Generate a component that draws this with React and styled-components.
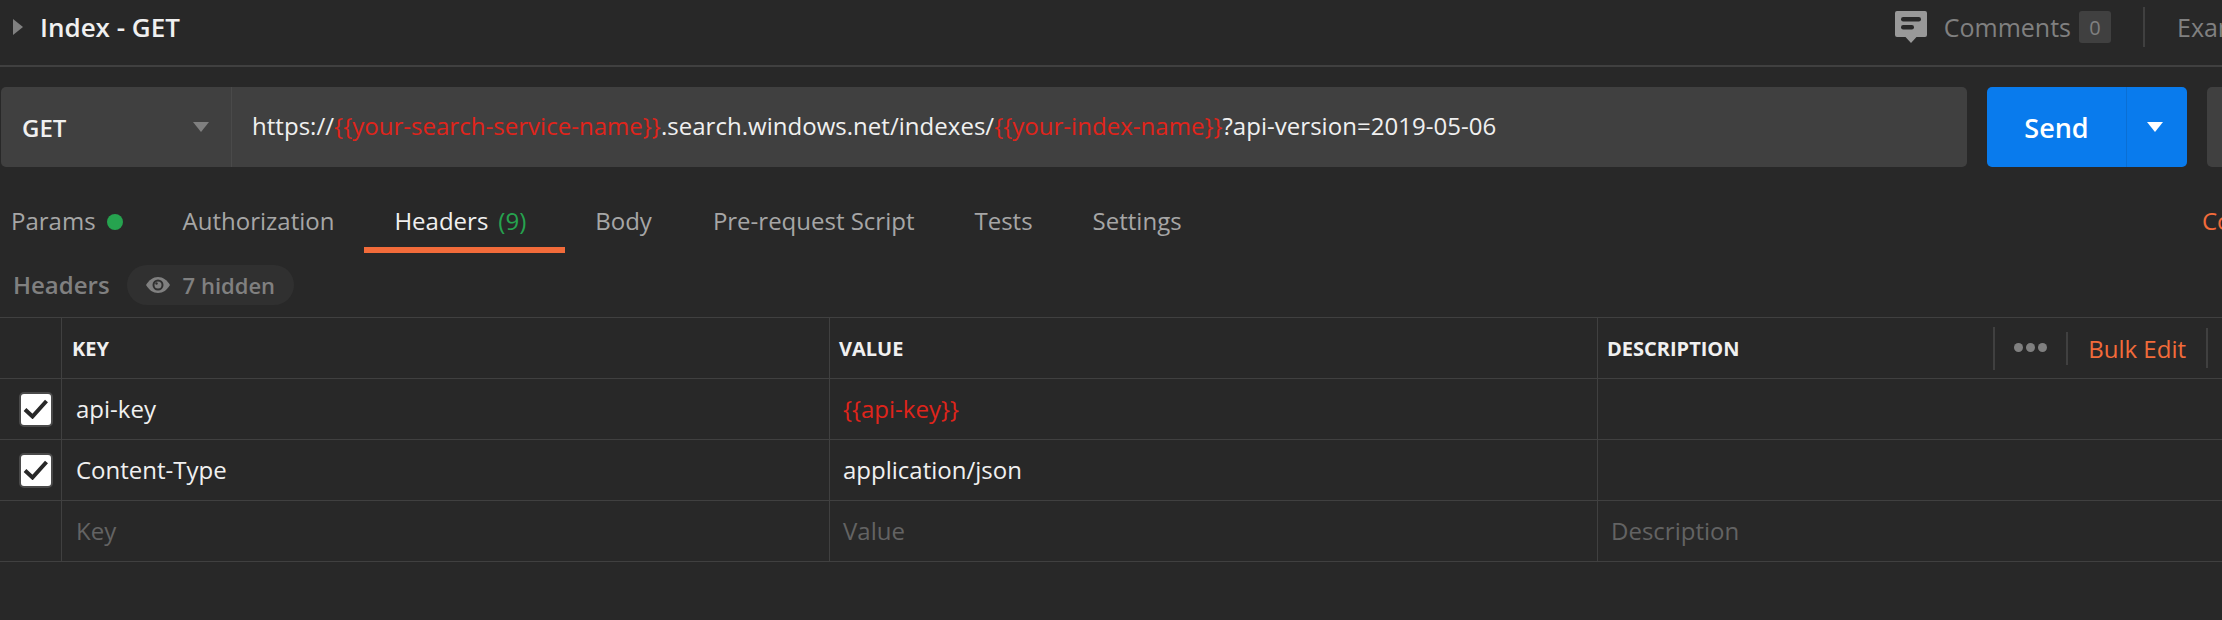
import React from 'react';
import styled, {createGlobalStyle} from 'styled-components';

const GlobalStyle = createGlobalStyle`
html, body {
  margin: 0;
  padding: 0;
  background: #282828;
}
`;

const Page = styled.div`
width: 2222px;
height: 620px;
overflow: hidden;
background: #282828;
color: #f0f0f0;
font-family: "Open Sans", "Noto Sans", sans-serif;
font-size: 24px;
white-space: nowrap;
`;

const TopBar = styled.header`
height: 65px;
border-bottom: 2px solid #404040;
display: flex;
align-items: center;
padding-left: 13px;
`;

const TitleWrap = styled.div`
display: flex;
align-items: center;
padding-bottom: 12px;
`;

const Title = styled.h1`
margin: 0 0 0 17px;
font-size: 26px;
font-weight: 600;
color: #f0f0f0;
`;

const TopRight = styled.div`
margin-left: auto;
display: flex;
align-items: center;
height: 65px;
padding-bottom: 11px;
box-sizing: border-box;
`;

const CommentsLabel = styled.span`
margin-left: 17px;
color: #808080;
font-size: 25px;
`;

const Badge = styled.span`
margin-left: 8px;
width: 32px;
height: 32px;
border-radius: 3px;
background: #404040;
color: #808080;
font-size: 20px;
display: flex;
align-items: center;
justify-content: center;
`;

const VDivider = styled.span`
width: 2px;
height: ${p => p.$h}px;
margin-left: ${p => p.$ml}px;
background: #404040;
flex-shrink: 0;
`;

const ClippedText = styled.span`
display: block;
width: ${p => p.$w}px;
overflow: hidden;
color: ${p => p.$color};
`;

const ExamplesWrap = styled.div`
margin-left: 32px;
font-size: 25px;
`;

const UrlRow = styled.div`
display: flex;
height: 80px;
margin-top: 20px;
padding-left: 1px;
`;

const UrlBox = styled.div`
width: 1966px;
flex-shrink: 0;
display: flex;
background: #404040;
border-radius: 5px;
`;

const Method = styled.div`
width: 231px;
box-sizing: border-box;
border-right: 1px solid #4a4a4a;
padding: 0 22px 0 21px;
display: flex;
align-items: center;
justify-content: space-between;
font-size: 24px;
font-weight: 600;
`;

const Url = styled.div`
padding-left: 20px;
line-height: 78px;
font-size: 24px;
letter-spacing: 0.03px;
color: #f0f0f0;
`;

const Variable = styled.span`
color: #e0241b;
`;

const SendButton = styled.div`
margin-left: 20px;
width: 200px;
flex-shrink: 0;
display: flex;
background: #097bed;
border-radius: 5px;
color: #fff;
`;

const SendLabel = styled.div`
width: 139px;
border-right: 1px solid #0a6fd4;
display: flex;
align-items: center;
justify-content: center;
font-size: 27px;
font-weight: 600;
`;

const SendCaret = styled.div`
flex: 1;
display: flex;
align-items: center;
justify-content: center;
padding: 0 4px 1px 0;
`;

const SaveStub = styled.div`
margin-left: 20px;
width: 15px;
flex-shrink: 0;
background: #404040;
border-radius: 5px 0 0 5px;
`;

const TabRow = styled.nav`
display: flex;
height: 86px;
box-sizing: border-box;
padding-top: 32px;
`;

const Tab = styled.div`
height: 54px;
box-sizing: border-box;
padding: 6px ${p => p.$pr}px 0 ${p => p.$pl}px;
font-size: 24px;
line-height: 32px;
color: ${p => (p.$active ? '#f0f0f0' : '#a6a6a6')};
border-bottom: 6px solid ${p => (p.$active ? '#f26b3a' : 'transparent')};
display: flex;
align-items: flex-start;
`;

const Dot = styled.span`
width: 16px;
height: 16px;
margin: 9px 0 0 11px;
border-radius: 50%;
background: #26a34f;
`;

const Count = styled.span`
margin-left: 10px;
color: #26a34f;
`;

const CookiesWrap = styled.div`
margin-left: auto;
padding-top: 6px;
line-height: 32px;
`;

const SubHeader = styled.div`
height: 64px;
box-sizing: border-box;
padding: 12px 0 0 13px;
display: flex;
align-items: flex-start;
`;

const SubTitle = styled.span`
font-size: 24px;
font-weight: 600;
line-height: 40px;
color: #808080;
`;

const HiddenPill = styled.div`
margin-left: 17px;
width: 167px;
height: 40px;
box-sizing: border-box;
padding-left: 19px;
border-radius: 20px;
background: #303030;
color: #808080;
font-size: 22px;
font-weight: 600;
display: flex;
align-items: center;
gap: 13px;
`;

const Table = styled.div`
border-top: 1px solid #404040;
`;

const Row = styled.div`
display: grid;
grid-template-columns: 62px 768px 768px 1fr;
height: 61px;
box-sizing: border-box;
border-bottom: 1px solid #404040;
`;

const Cell = styled.div`
display: flex;
align-items: center;
box-sizing: border-box;
height: 60px;
padding-left: ${p => p.$pl || 0}px;
padding-bottom: ${p => (p.$head ? 0 : 2)}px;
font-size: ${p => (p.$head ? 20 : 24)}px;
font-weight: ${p => (p.$head ? 700 : 400)};
color: ${p => p.$color || '#f0f0f0'};
border-right: ${p => (p.$last ? 'none' : '1px solid #404040')};
`;

const CheckCell = styled(Cell)`
padding-left: 19px;
padding-bottom: 0;
`;

const CheckBox = styled.div`
width: 34px;
height: 35px;
box-sizing: border-box;
background: #fff;
border: 2px solid #4a4a4a;
border-radius: 5px;
display: flex;
align-items: center;
justify-content: center;
`;

const Actions = styled.div`
margin-left: auto;
display: flex;
align-items: center;
height: 60px;
padding-right: 14px;
`;

const Dots = styled.div`
margin-left: 19px;
display: flex;
gap: 3px;
padding-bottom: 2px;
`;

const Pip = styled.span`
width: 9px;
height: 9px;
border-radius: 50%;
background: #808080;
`;

const BulkEdit = styled.span`
margin-left: 20px;
font-size: 24px;
font-weight: 400;
color: #f26b3a;
`;

const Caret = ({color, size = 16, height = 10}) => (
  <svg width={size} height={height} viewBox="0 0 16 10">
    <path d="M0 0H16L8 10Z" fill={color}/>
  </svg>
);

const SideArrow = () => (
  <svg width="10" height="16" viewBox="0 0 10 16">
    <path d="M0 0L10 8L0 16Z" fill="#808080"/>
  </svg>
);

const CommentIcon = () => (
  <svg width="32" height="32" viewBox="0 0 32 32">
    <path d="M2 0H30a2 2 0 0 1 2 2V24a2 2 0 0 1-2 2H21.500L16 32L10.500 26H2a2 2 0 0 1-2-2V2a2 2 0 0 1 2-2Z" fill="#999"/>
    <rect x="6" y="6" width="20" height="4.500" rx="2.200" fill="#282828"/>
    <rect x="6" y="14" width="13" height="4.500" rx="2.200" fill="#282828"/>
  </svg>
);

const EyeIcon = () => (
  <svg width="24" height="16" viewBox="0 0 24 16">
    <path d="M0 8C3 3 7 0 12 0S21 3 24 8C21 13 17 16 12 16S3 13 0 8Z" fill="#808080"/>
    <circle cx="12" cy="8" r="5.500" fill="#303030"/>
    <circle cx="12" cy="8" r="3.500" fill="#808080"/>
    <circle cx="10.500" cy="6.500" r="1.200" fill="#303030"/>
  </svg>
);

const CheckIcon = () => (
  <svg width="26" height="20" viewBox="0 0 26 20">
    <path d="M2 10.500L9.500 17.500L23.500 2" fill="none" stroke="#282828" strokeWidth="4"/>
  </svg>
);

const App = () => {
  return (
    <Page>
      <GlobalStyle/>
      <TopBar>
        <TitleWrap>
          <SideArrow/>
          <Title>Index - GET</Title>
        </TitleWrap>
        <TopRight>
          <CommentIcon/>
          <CommentsLabel>Comments</CommentsLabel>
          <Badge>0</Badge>
          <VDivider $h={40} $ml={32}/>
          <ExamplesWrap>
            <ClippedText $w={45} $color="#808080">Examples</ClippedText>
          </ExamplesWrap>
        </TopRight>
      </TopBar>

      <UrlRow>
        <UrlBox>
          <Method>
            GET
            <Caret color="#808080"/>
          </Method>
          <Url>
            https://<Variable>{'{{your-search-service-name}}'}</Variable>.search.windows.net/indexes/<Variable>{'{{your-index-name}}'}</Variable>?api-version=2019-05-06
          </Url>
        </UrlBox>
        <SendButton>
          <SendLabel>Send</SendLabel>
          <SendCaret><Caret color="#fff"/></SendCaret>
        </SendButton>
        <SaveStub/>
      </UrlRow>

      <TabRow>
        <Tab $pl={11} $pr={30}>Params<Dot/></Tab>
        <Tab $pl={30} $pr={30}>Authorization</Tab>
        <Tab $active $pl={30} $pr={39}>Headers<Count>(9)</Count></Tab>
        <Tab $pl={30} $pr={31}>Body</Tab>
        <Tab $pl={30} $pr={30}>Pre-request Script</Tab>
        <Tab $pl={30} $pr={30}>Tests</Tab>
        <Tab $pl={30} $pr={30}>Settings</Tab>
        <CookiesWrap>
          <ClippedText $w={20} $color="#f26b3a">Cookies</ClippedText>
        </CookiesWrap>
      </TabRow>

      <SubHeader>
        <SubTitle>Headers</SubTitle>
        <HiddenPill>
          <EyeIcon/>
          7 hidden
        </HiddenPill>
      </SubHeader>

      <Table>
        <Row>
          <Cell/>
          <Cell $head $pl={10}>KEY</Cell>
          <Cell $head $pl={9}>VALUE</Cell>
          <Cell $head $pl={9} $last>
            DESCRIPTION
            <Actions>
              <VDivider $h={43} $ml={0}/>
              <Dots><Pip/><Pip/><Pip/></Dots>
              <VDivider $h={33} $ml={19}/>
              <BulkEdit>Bulk Edit</BulkEdit>
              <VDivider $h={40} $ml={20}/>
            </Actions>
          </Cell>
        </Row>
        <Row>
          <CheckCell><CheckBox><CheckIcon/></CheckBox></CheckCell>
          <Cell $pl={14}>api-key</Cell>
          <Cell $pl={13} $color="#e0241b">{'{{api-key}}'}</Cell>
          <Cell $last/>
        </Row>
        <Row>
          <CheckCell><CheckBox><CheckIcon/></CheckBox></CheckCell>
          <Cell $pl={14}>Content-Type</Cell>
          <Cell $pl={13}>application/json</Cell>
          <Cell $last/>
        </Row>
        <Row>
          <Cell/>
          <Cell $pl={14} $color="#636363">Key</Cell>
          <Cell $pl={13} $color="#636363">Value</Cell>
          <Cell $pl={13} $color="#636363" $last>Description</Cell>
        </Row>
      </Table>
    </Page>
  );
};

export default App;
